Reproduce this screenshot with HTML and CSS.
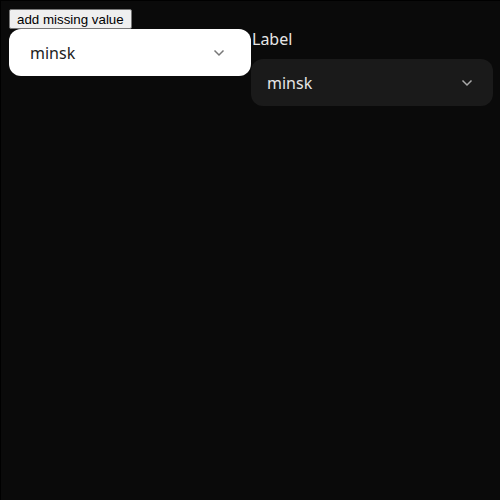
FILE: index.html
```html
<!DOCTYPE html>
<html>
<head>
<meta charset="utf-8">
<link rel="stylesheet" href="styles.css">
</head>
<body>
<div class="app">
  <button class="add-btn">add missing value</button>
  <div class="row">
    <div class="select light">
      <span class="value">minsk</span>
      <svg class="chev" width="12" height="8" viewBox="0 0 12 8"><path d="M1.5 1.5 L6 6 L10.5 1.5" fill="none" stroke="currentColor" stroke-width="1.5"/></svg>
    </div>
    <div class="field">
      <div class="label">Label</div>
      <div class="select dark">
        <span class="value">minsk</span>
        <svg class="chev" width="12" height="8" viewBox="0 0 12 8"><path d="M1.5 1.5 L6 6 L10.5 1.5" fill="none" stroke="currentColor" stroke-width="1.5"/></svg>
      </div>
    </div>
  </div>
</div>
</body>
</html>
```
FILE: styles.css
```css
html, body {
  margin: 0;
  background: #000;
}
.app {
  box-sizing: border-box;
  width: 500px;
  height: 500px;
  border-left: 1px solid #000;
  border-top: 1px solid #000;
  background: #0a0a0a;
  padding: 8px 0 0 8px;
  font-family: "Noto Sans", sans-serif;
}
.add-btn {
  display: block;
  font-family: "Liberation Sans", Arial, sans-serif;
  font-size: 13.33px;
  margin: 0;
  padding: 1px 7px;
  height: 20px;
  background: #efefef;
  color: #000;
  border: 1px solid #767676;
  border-radius: 2px;
}
.row {
  display: flex;
  align-items: flex-start;
}
.select {
  box-sizing: border-box;
  width: 242px;
  height: 47px;
  border-radius: 12px;
  display: flex;
  align-items: center;
  justify-content: space-between;
  font-size: 16px;
}
.light {
  background: #fff;
  color: #222;
  padding: 0 26px 0 21px;
}
.light .chev {
  color: #777;
}
.dark {
  background: #1a1a1a;
  color: #e6e6e6;
  padding: 0 20px 0 16px;
}
.dark .chev {
  color: #aaa;
}
.field {
  display: flex;
  flex-direction: column;
}
.label {
  color: #e6e6e6;
  font-size: 16px;
  height: 30px;
  line-height: 20px;
  margin-left: 1px;
}
.value {
  line-height: 20px;
}
```
